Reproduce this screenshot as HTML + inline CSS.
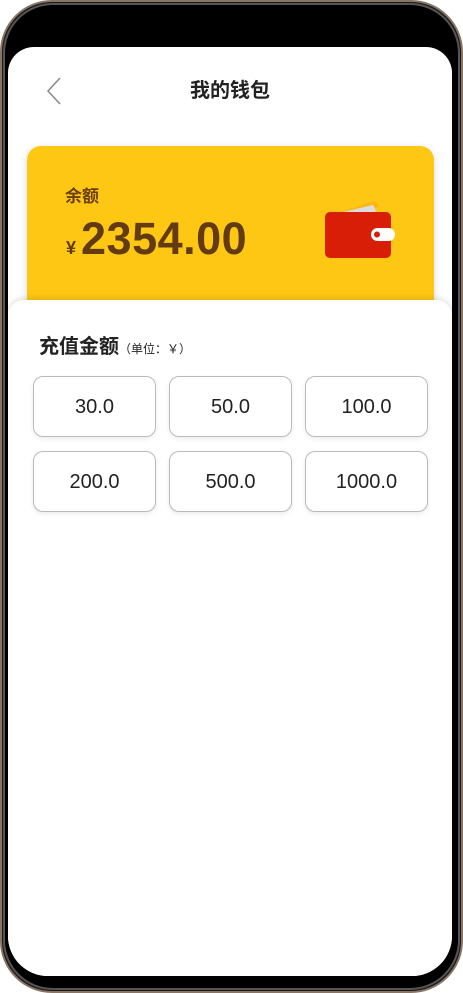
<!DOCTYPE html>
<html><head><meta charset="utf-8"><style>
*{margin:0;padding:0;box-sizing:border-box}
body{width:463px;height:993px;background:#fff;position:relative;overflow:hidden;font-family:"Liberation Sans","Noto Sans CJK SC",sans-serif}
.frame{position:absolute;left:0;top:0;width:463px;height:993px;border-radius:52px;background:#1a1a1a;border:2px solid #8a7565}
.frame2{position:absolute;left:3px;top:3px;width:457px;height:987px;border-radius:50px;background:#000;border:2px solid #555}
.screen{position:absolute;left:8px;top:47px;width:444px;height:929px;background:#fff;border-radius:26px 26px 40px 40px;overflow:hidden}
.title{position:absolute;left:0;width:444px;top:27px;text-align:center;font-size:20px;font-weight:bold;color:#222}
.card{position:absolute;left:19px;top:99px;width:407px;height:170px;background:#fec714;border-radius:14px;box-shadow:0 2px 8px rgba(0,0,0,.15)}
.lbl{position:absolute;left:38px;top:36px;font-size:17px;font-weight:bold;color:#6a3f12}
.amt{position:absolute;left:39px;top:67px;color:#623b12;font-weight:bold}
.sheet{position:absolute;left:0;top:253px;width:444px;height:700px;background:#fff;border-radius:16px 16px 0 0;box-shadow:0 -2px 6px rgba(0,0,0,.12)}
.h{position:absolute;left:31px;top:30px;font-size:20px;font-weight:bold;color:#222}
.h small{font-size:12px;font-weight:normal}
.b{position:absolute;width:123px;height:61px;border:1px solid #bbb;border-radius:10px;box-shadow:0 2px 5px rgba(0,0,0,.08);text-align:center;line-height:61px;font-size:20px;color:#222}
</style></head><body>
<div class="frame"></div><div class="frame2"></div>
<div class="screen">
<svg style="position:absolute;left:38px;top:30px" width="16" height="28"><path d="M14 1 L2 14 L14 27" fill="none" stroke="#888" stroke-width="1.5"/></svg>
<div class="title">我的钱包</div>
<div class="card">
<div class="lbl">余额</div>
<div class="amt"><span style="font-size:18px;margin-right:5px">¥</span><span style="font-size:45px;letter-spacing:0.5px">2354.00</span></div>
<svg style="position:absolute;left:298px;top:55px" width="70" height="62"><path d="M12 12 L50 0 L54 6 Z" fill="#fdb515"/><path d="M14 12 L48 4 L52 12Z" fill="#ddd"/><rect x="0" y="11" width="66" height="46" rx="5" fill="#d81e06"/><rect x="46" y="27" width="24" height="13" rx="6.5" fill="#fff"/><circle cx="52" cy="33.5" r="3" fill="#d81e06"/></svg>
</div>
<div class="sheet">
<div class="h">充值金额<small>（单位：￥）</small></div>
<div class="b" style="left:25px;top:76px">30.0</div>
<div class="b" style="left:161px;top:76px">50.0</div>
<div class="b" style="left:297px;top:76px">100.0</div>
<div class="b" style="left:25px;top:151px">200.0</div>
<div class="b" style="left:161px;top:151px">500.0</div>
<div class="b" style="left:297px;top:151px">1000.0</div>
</div>
</div>
</body></html>
